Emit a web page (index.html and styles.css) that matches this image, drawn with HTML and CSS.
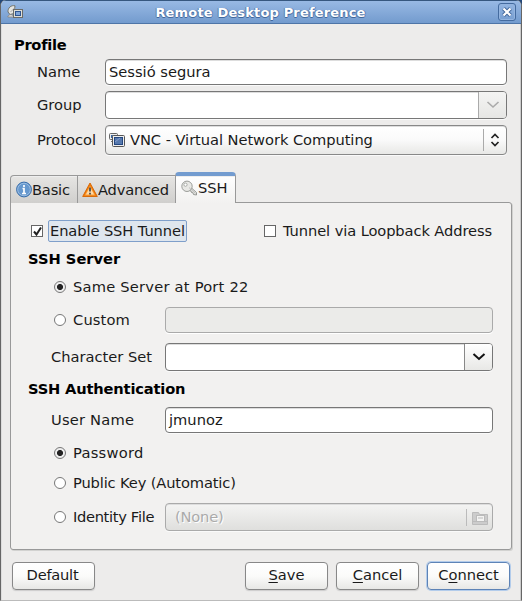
FILE: index.html
```html
<!DOCTYPE html>
<html lang="en">
<head>
<meta charset="utf-8">
<title>Remote Desktop Preference</title>
<link rel="stylesheet" href="styles.css">
</head>
<body>
<div class="window">
  <header class="titlebar">
    <svg class="app-icon" width="16" height="14" viewBox="0 0 16 14"><path d="M8 .8C4-.2.700 3 1 7l2 2.500 4-1z" fill="#e6e6e2" stroke="#70736f"/><path d="M3.500 7 8 2.500" stroke="#aaa" fill="none"/><path d="M.800 12c0-3 6-3 6 0z" fill="#eee" stroke="#888"/><rect x="6.500" y="4.500" width="9" height="8" fill="#deded8" stroke="#6b6b68"/><rect x="8.500" y="6.500" width="5" height="4" fill="#7fa4d6" stroke="#2f5590"/></svg>
    <h1>Remote Desktop Preference</h1>
    <span class="close"><svg width="12" height="12" viewBox="0 0 12 12"><path d="m2.500 2.500 7 7m0-7-7 7" stroke="#41679b" stroke-width="4"/><path d="m2.500 2.500 7 7m0-7-7 7" stroke="#fff" stroke-width="2.200"/></svg></span>
  </header>
  <main class="content">
    <h2 class="profile-title">Profile</h2>
    <div class="profile">
      <div class="row"><label>Name</label><div class="field entry">Sessió segura</div></div>
      <div class="row"><label>Group</label><div class="field combo"><span class="drop off"><svg width="14" height="8" viewBox="0 0 14 8"><path d="m1.500 1 5.500 5 5.500-5" fill="none" stroke="#aaa" stroke-width="1.600"/></svg></span></div></div>
      <div class="row"><label>Protocol</label><div class="field select">
        <svg width="17" height="14" viewBox="0 0 17 14"><rect x=".5" y=".5" width="8" height="6" rx="1" fill="#eee" stroke="#666"/><rect x="2" y="2" width="5" height="3" fill="#3969a5"/><path d="M2 8.500h2" stroke="#777"/><rect x="3.500" y="2.500" width="12" height="11" rx="1" fill="#eee" stroke="#555"/><rect x="5.500" y="4.500" width="8" height="7" fill="#5779ae" stroke="#244780"/><path d="M6 9 11 5" stroke="#86a2cf"/></svg>
        <span class="value">VNC - Virtual Network Computing</span>
        <span class="updown"><svg width="10" height="14" viewBox="0 0 10 14"><path d="m1.500 5 3.500-3.500L8.500 5M1.500 9 5 12.500 8.500 9" fill="none" stroke="#222" stroke-width="1.700"/></svg></span>
      </div></div>
    </div>
    <nav class="tabs">
      <span class="tab basic"><svg width="16" height="17" viewBox="0 0 16 17"><circle cx="8" cy="8.500" r="7.400" fill="#6698ce" stroke="#356ba8"/><circle cx="8" cy="8.500" r="6.300" fill="none" stroke="#9bbde2"/><path d="M8 4v2M6.500 7.500H8v5M6 12.500h4" fill="none" stroke="#fff" stroke-width="1.700"/></svg><span>Basic</span></span>
      <span class="tab advanced"><svg width="16" height="16" viewBox="0 0 16 16"><path d="M8 1 15.300 14.500H.700z" fill="#f57900" stroke="#d66a0b" stroke-linejoin="round"/><path d="M8 3.500 13.500 13.500h-11z" fill="#f6a03e"/><path d="m8 5 4 7.500H4z" fill="#ffd9a6"/><path d="M8 5.500v4m0 1.300v1.700" stroke="#444" stroke-width="1.700"/></svg><span>Advanced</span></span>
      <span class="tab ssh"><svg width="16" height="17" viewBox="0 0 16 17"><path d="m8.500 10.500 1.500.5.500 1.500 1.500.3.500 1.700 3 .5v-2.500L10.500 8z" fill="#e4e4e1" stroke="#8d8f8b" stroke-width=".9"/><circle cx="6" cy="6.300" r="5.200" fill="#e8e8e5" stroke="#929490" stroke-width=".9"/><circle cx="4.500" cy="4.700" r="1.600" fill="#fff" stroke="#a2a49f" stroke-width=".9"/><path d="m8 7.500 6.500 6" stroke="#b4b5b2" stroke-width=".8"/></svg><span>SSH</span></span>
    </nav>
    <section class="panel">
      <div class="checks"><i class="check"><svg width="11" height="11" viewBox="0 0 11 11"><path d="m2 5.500 2.500 3L9 1.500" fill="none" stroke="#222" stroke-width="2"/></svg></i><span class="focus">Enable SSH Tunnel</span><i class="check second"></i><span class="loopback">Tunnel via Loopback Address</span></div>
      <h2>SSH Server</h2>
      <div class="option same"><i class="radio on"></i><span>Same Server at Port 22</span></div>
      <div class="option custom"><div class="name"><i class="radio"></i><span>Custom</span></div><div class="field entry disabled"></div></div>
      <div class="option charset"><div class="name">Character Set</div><div class="field combo"><span class="drop"><svg width="14" height="8" viewBox="0 0 14 8"><path d="m1.500 1 5.500 5 5.500-5" fill="none" stroke="#111" stroke-width="2"/></svg></span></div></div>
      <h2 class="auth">SSH Authentication</h2>
      <div class="option user"><div class="name">User Name</div><div class="field entry">jmunoz</div></div>
      <div class="option password"><i class="radio on"></i><span>Password</span></div>
      <div class="option public"><i class="radio"></i><span>Public Key (Automatic)</span></div>
      <div class="option identity"><div class="name"><i class="radio"></i><span>Identity File</span></div><div class="field file"><span>(None)</span><span class="folder"><svg width="16" height="15" viewBox="0 0 16 15"><path d="M.500 13.500v-12h6l1 2h8v10z" fill="#ccc" stroke="#bbb"/><rect x="4.500" y="4.500" width="8" height="6" fill="#f3f3f2" stroke="#bbb"/><path d="M6 7h5M1 10.500h14" stroke="#bbb"/></svg></span></div></div>
    </section>
    <footer class="actions"><button class="default">Default</button><button><span><u>S</u>ave</span></button><button><span><u>C</u>ancel</span></button><button class="primary"><span>C<u>o</u>nnect</span></button></footer>
  </main>
</div>
</body>
</html>
```
FILE: styles.css
```css
* { box-sizing: border-box; }
body { margin: 0; width: 522px; height: 601px; overflow: hidden; background: #24487a; color: #1a1a1a; font: 14.67px/20px "DejaVu Sans", sans-serif; white-space: nowrap; }
svg { display: block; flex: none; }
.window { width: 522px; height: 601px; background: #edeceb; border-left: 1px solid #666; border-right: 1px solid #666; border-bottom: 1px solid #bbb; border-radius: 6px 6px 0 0; overflow: hidden; box-shadow: inset 1px 0 #ddd, inset -1px 0 #ccc; }
.titlebar { height: 24px; display: flex; align-items: center; padding: 1px 5px 0 6px; background: linear-gradient(#98b9e4, #739bce); border-top: 1px solid #36577f; border-bottom: 1px solid #4e75a7; }
.app-icon { margin-top: -2px; }
.titlebar h1 { flex: 1; margin: 0; text-align: center; color: #fff; font-size: 13px; line-height: 20px; letter-spacing: .16px; text-shadow: 0 1px #41679b, 1px 0 #5b80b3, -1px 0 #5b80b3; }
.close { width: 18px; height: 18px; margin-top: -1px; display: grid; place-items: center; border: 1px solid #446b9f; border-radius: 3px; box-shadow: inset 0 0 0 1px #93b4df; }
.content { padding: 11px 9px 0 9px; }
h2 { font-size: 14.67px; line-height: 20px; margin: 0; color: #000; }
.profile-title { padding-left: 4px; letter-spacing: -.3px; }
.profile { margin-top: 4px; padding: 0 5px 0 27px; }
.row { display: flex; align-items: center; margin-bottom: 6px; }
.row label { width: 68px; }
.row .field { flex: 1; }
.field { border: 1px solid #777; border-radius: 4px; background: #fff; box-shadow: 0 1px #fafafa, inset 0 1px #ddd; }
.entry { height: 26px; padding: 2px 3px; }
.combo { height: 28px; display: flex; justify-content: flex-end; }
.drop { width: 28px; display: grid; place-items: center; border-left: 1px solid #888; border-radius: 0 3px 3px 0; background: linear-gradient(#fff, #e8e8e6); }
.drop.off { border-color: #aaa; background: linear-gradient(#f4f4f3, #e6e6e4); }
.select { height: 30px; display: flex; align-items: center; padding-left: 3px; background: linear-gradient(#fff, #fafafa 50%, #e8e8e6); border-color: #888; }
.value { margin-left: 4px; letter-spacing: -.06px; }
.updown { margin-left: auto; width: 23px; height: 22px; display: grid; place-items: center; border-left: 1px solid #aaa; }
.tabs { display: flex; align-items: flex-end; height: 31px; margin-top: 17px; }
.tab { height: 28px; display: flex; align-items: center; border: 1px solid #999; border-bottom: 0; background: linear-gradient(#e6e5e3, #d0cfcd); box-shadow: inset 0 1px #eee; }
.basic { width: 68px; padding-left: 5px; border-radius: 4px 0 0; letter-spacing: -.2px; }
.advanced { width: 98px; padding-left: 4px; border-left: 0; letter-spacing: -.2px; }
.ssh { width: 61px; height: 31px; padding: 0 0 3px 5px; margin-left: -1px; border-top: 4px solid #739cd0; border-radius: 4px 4px 0 0; background: linear-gradient(#fff, #f2f1f0); position: relative; z-index: 1; }
.ssh span { margin-left: 1px; letter-spacing: -.1px; }
.panel { height: 348px; margin-top: -1px; padding: 16px 18px 0 17px; border: 1px solid #999; border-radius: 0 3px 3px; background: #f2f1f0; box-shadow: 1px 1px #d2d2d0; }
.checks { display: flex; align-items: center; height: 24px; padding-left: 3px; }
.check { flex: none; width: 12px; height: 12px; background: #fff; border: 1px solid #666; }
.focus { flex: none; width: 139px; height: 22px; margin-left: 5px; padding-left: 1px; border: 1px solid #7f9fca; border-radius: 2px; background: #dfe6ee; line-height: 20px; letter-spacing: -.1px; }
.second { margin: 0 7px 0 77px; }
.loopback { letter-spacing: -.1px; }
.panel h2 { margin-top: 6px; }
.option { display: flex; align-items: center; height: 30px; }
.name { width: 114px; display: flex; align-items: center; flex: none; }
.radio { width: 12px; height: 12px; margin-right: 7px; flex: none; border: 1px solid #777; border-radius: 50%; background: #fff; }
.radio.on { background: radial-gradient(circle, #222 0 2.600px, #eee 3.500px); }
.same, .password, .public { padding-left: 26px; }
.same { margin-top: 3px; letter-spacing: .22px; }
.custom { margin-top: 3px; padding-left: 26px; letter-spacing: .15px; }
.custom .name, .identity .name { width: 111px; }
.option .field { flex: none; width: 328px; }
.disabled { background: #ebebe9; border-color: #aaa; box-shadow: 0 1px #fff; }
.charset { margin-top: 7px; padding-left: 23px; }
.panel .auth { margin-top: 7px; letter-spacing: -.18px; }
.user { margin-top: 6px; padding-left: 23px; }
.user .name { letter-spacing: .2px; }
.password { margin-top: 3px; letter-spacing: .25px; }
.public { letter-spacing: -.14px; }
.identity { margin-top: 4px; padding-left: 26px; }
.identity .name { letter-spacing: -.33px; }
.file { height: 28px; display: flex; align-items: center; padding: 0 4px 0 9px; color: #aaa; letter-spacing: -.2px; background: linear-gradient(#f4f4f3, #dfdfdd); border-color: #aaa; text-shadow: 1px 1px #fff; }
.folder { margin-left: auto; padding: 2px 0 0 5px; border-left: 1px solid #bbb; }
.actions { display: flex; gap: 8px; margin-top: 12px; padding: 0 2px; }
button { width: 83px; height: 28px; padding: 0 0 2px; font: inherit; color: #1a1a1a; border: 1px solid #888; border-radius: 4px; background: linear-gradient(#fff, #fbfbfa 50%, #e8e8e6); box-shadow: 0 1px 1px #ccc; }
button.default { margin-right: auto; padding-right: 2px; letter-spacing: -.25px; }
button.primary { border-color: #5d83b6; box-shadow: 0 0 0 1px #b3cceb; }
u { text-underline-offset: 2px; text-decoration-thickness: 1px; text-decoration-skip-ink: none; }
```
